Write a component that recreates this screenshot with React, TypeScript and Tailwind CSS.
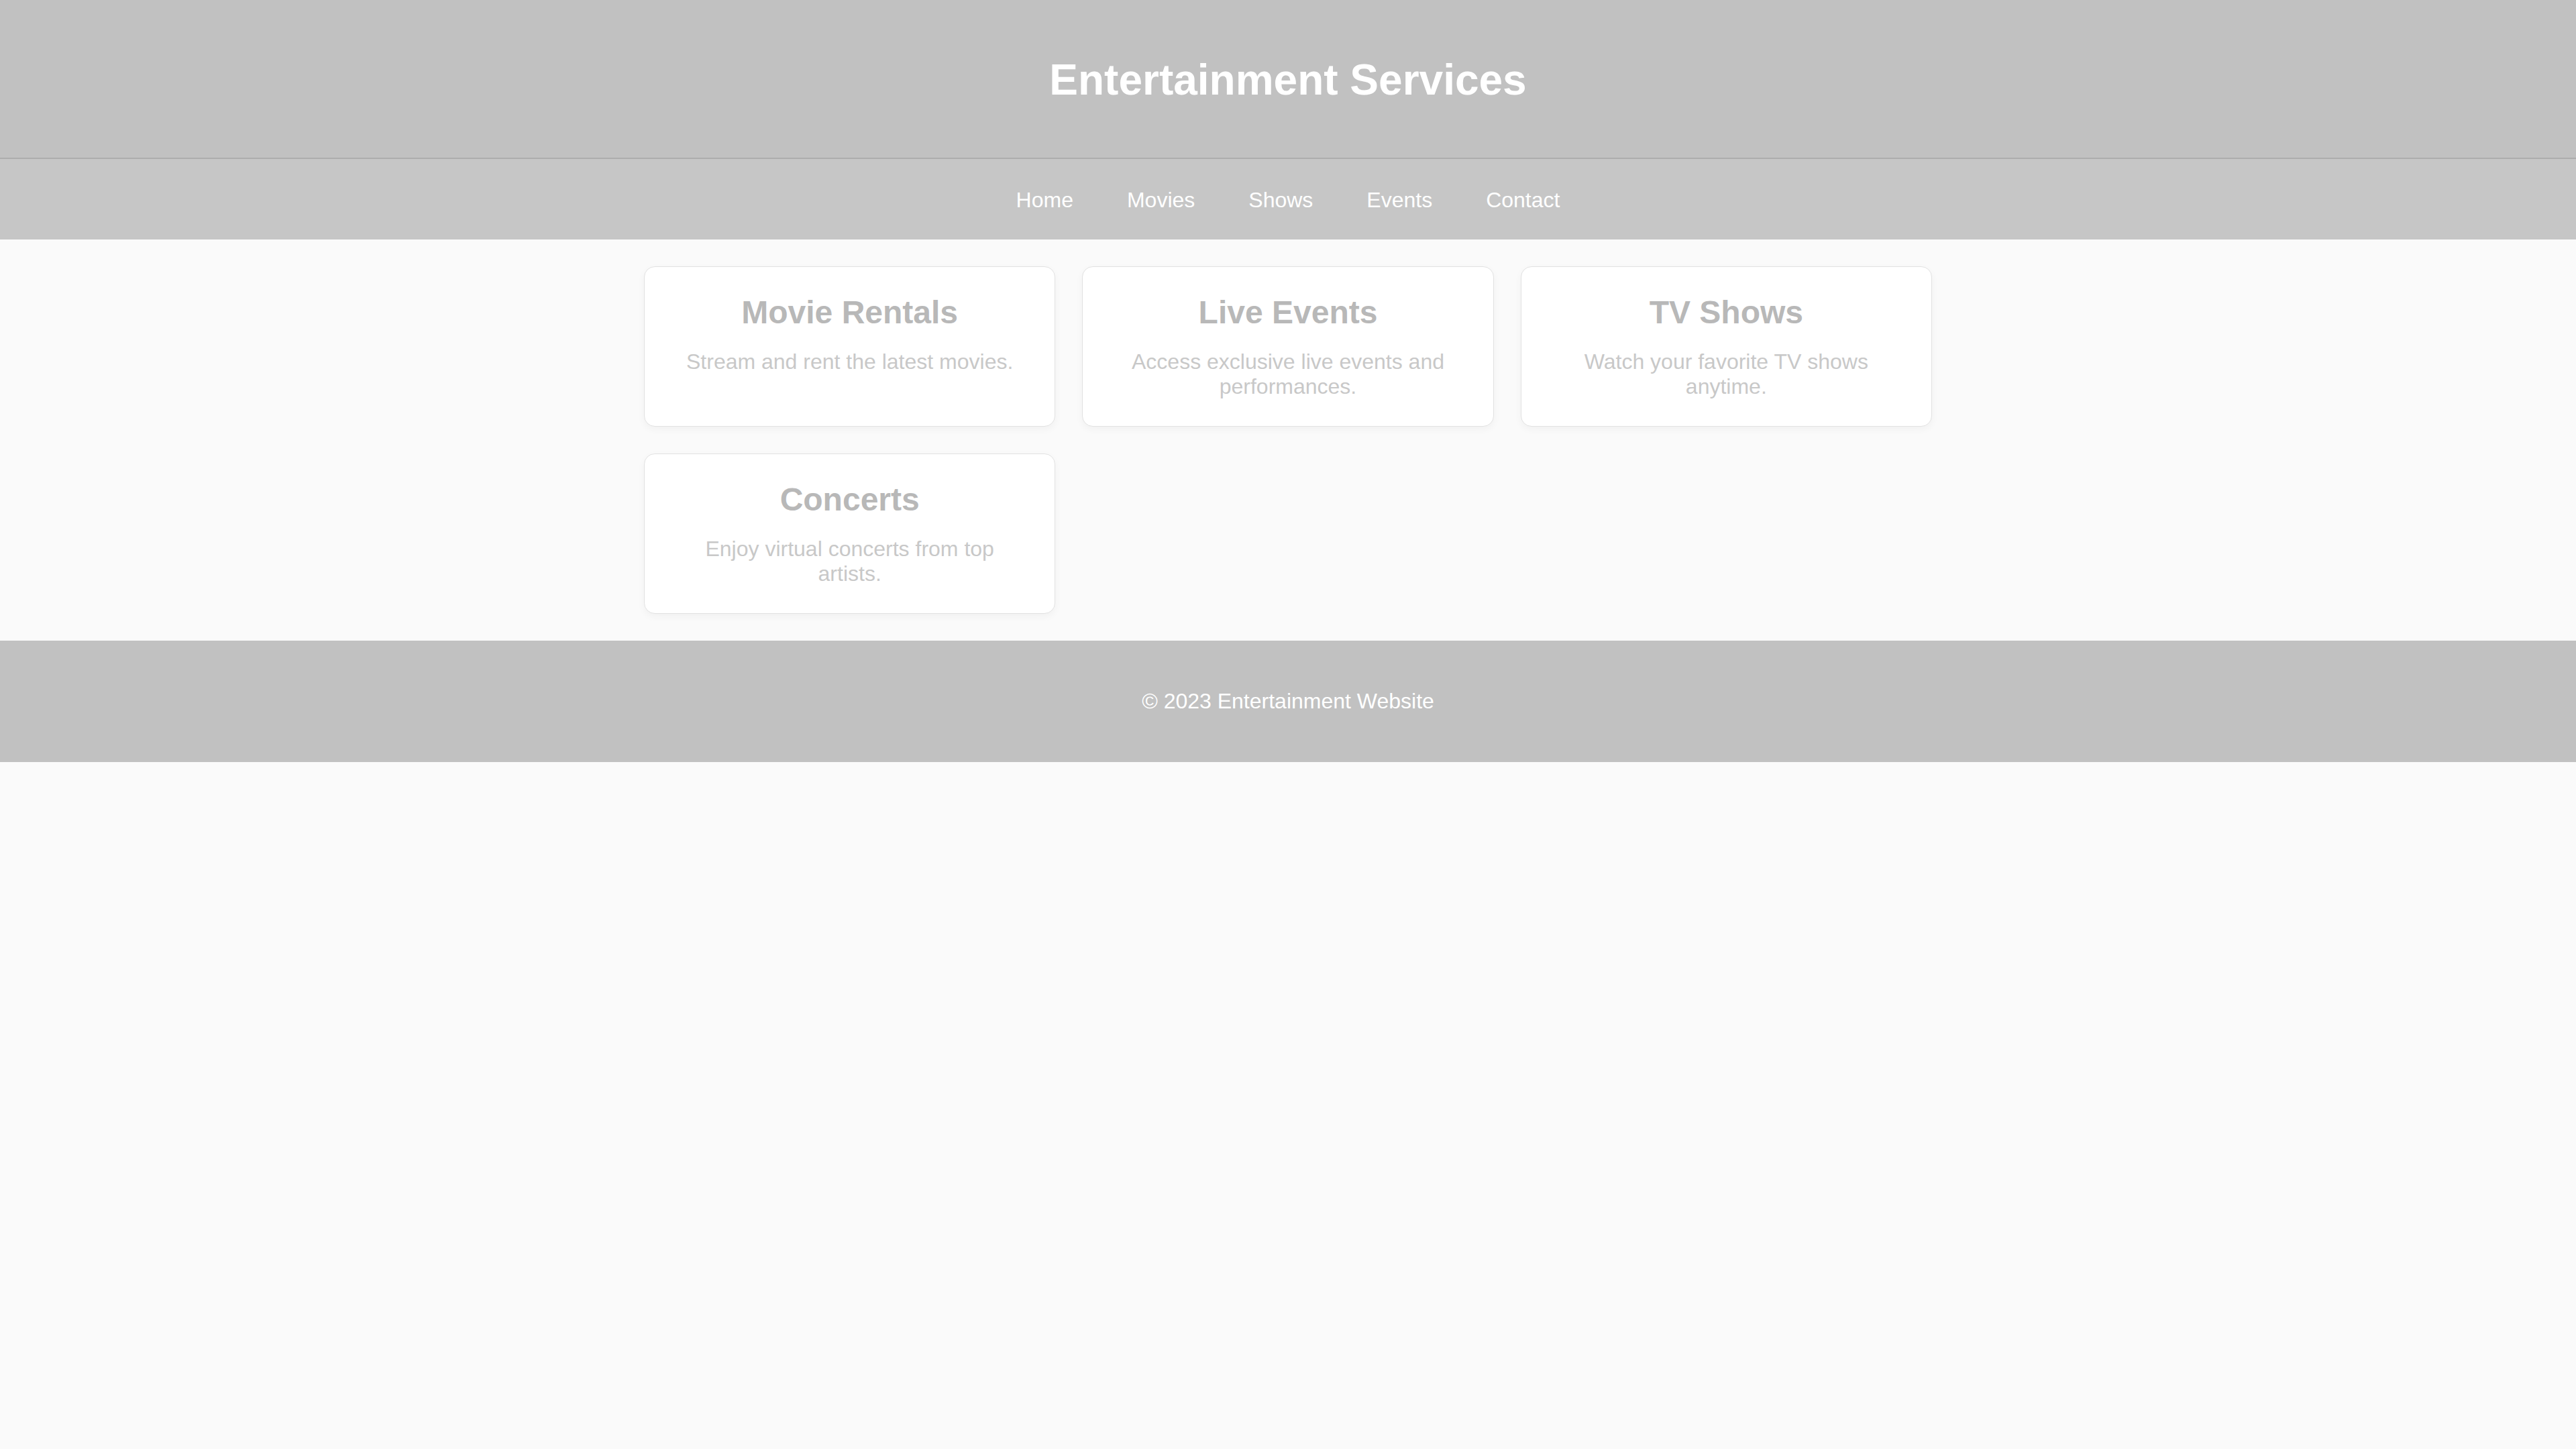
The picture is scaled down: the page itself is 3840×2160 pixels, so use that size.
import React from 'react';

interface Service {
  title: string;
  description: string;
}

const services: Service[] = [
  { title: 'Movie Rentals', description: 'Stream and rent the latest movies.' },
  { title: 'Live Events', description: 'Access exclusive live events and performances.' },
  { title: 'TV Shows', description: 'Watch your favorite TV shows anytime.' },
  { title: 'Concerts', description: 'Enjoy virtual concerts from top artists.' }
];

const navLinks = ['Home', 'Movies', 'Shows', 'Events', 'Contact'];

const ServiceCard: React.FC<{ service: Service }> = ({ service }) => (
  <div className="bg-white border border-[#e2e2e2] rounded-[16px] shadow-[0_4px_12px_rgba(0,0,0,0.04)] p-10 text-center">
    <h2 className="text-[48px] leading-[55px] font-bold text-[#b8b8b8] mb-[28px]">{service.title}</h2>
    <p className="text-[32px] leading-[37px] text-[#c8c8c8]">{service.description}</p>
  </div>
);

export default function App() {
  return (
    <div className="min-h-[2160px] bg-[#fafafa] font-['Liberation_Sans',Arial,sans-serif]">
      <header className="h-[237px] pt-[2px] bg-[#c1c1c1] border-b-2 border-[#adadad] flex items-center justify-center">
        <h1 className="text-[64px] leading-[74px] font-bold text-white">Entertainment Services</h1>
      </header>

      <nav className="h-[120px] pt-[2px] bg-[#c6c6c6] flex items-center justify-center gap-[80px]">
        {navLinks.map((link) => (
          <a key={link} href="#" className="text-[32px] leading-[37px] text-white">
            {link}
          </a>
        ))}
      </nav>

      <main className="py-10">
        <div className="w-[1920px] mx-auto grid grid-cols-3 gap-10">
          {services.map((service) => (
            <ServiceCard key={service.title} service={service} />
          ))}
        </div>
      </main>

      <footer className="h-[181px] bg-[#c1c1c1] flex items-center justify-center">
        <p className="text-[32px] leading-[37px] text-white">© 2023 Entertainment Website</p>
      </footer>
    </div>
  );
}
